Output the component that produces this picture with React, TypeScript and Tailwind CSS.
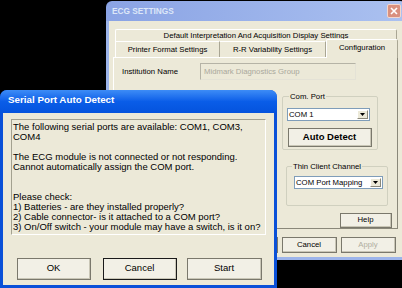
const dialogLines = [
  'The following serial ports are available: COM1, COM3,',
  'COM4',
  '',
  'The ECG module is not connected or not responding.',
  'Cannot automatically assign the COM port.',
  '',
  '',
  'Please check:',
  '1) Batteries - are they installed properly?',
  '2) Cable connector- is it attached to a COM port?',
  '3) On/Off switch - your module may have a switch, is it on?',
];

function Btn({ label, className = '', disabled = false, focused = false }: { label: string; className?: string; disabled?: boolean; focused?: boolean }) {
  return (
    <div
      className={`flex items-center justify-center border ${focused ? 'border-[#1a1a1a]' : 'border-[#7a786c]'} bg-[#f2f0e6] ${className}`}
    >
      <div className="flex h-full w-full items-center justify-center border-b border-r border-b-[#c9c6b6] border-r-[#c9c6b6]">
        <span className={disabled ? 'text-[#b1aea0]' : 'text-black'}>{label}</span>
      </div>
    </div>
  );
}

function Combo({ value, className = '' }: { value: string; className?: string }) {
  return (
    <div className={`flex items-stretch border border-[#7f9db9] bg-white ${className}`}>
      <span className="flex-1 pl-[1px] leading-[11px]">{value}</span>
      <div className="m-[1px] flex w-[11px] items-center justify-center border border-b-[#8a887a] border-r-[#8a887a] border-t-white border-l-white bg-[#ece9d8]">
        <svg width="5" height="3" viewBox="0 0 5 3">
          <path d="M0 0h5L2.5 3z" fill="#000" />
        </svg>
      </div>
    </div>
  );
}

function EcgSettings() {
  return (
    <div className="absolute left-[106px] top-[1px] flex h-[259px] w-[300px] flex-col overflow-hidden rounded-t-[6px] text-[7.75px]">
      <div className="flex h-[20px] shrink-0 items-center justify-between bg-linear-to-r from-[#8aa3e4] to-[#abc1f0] pl-[6px] pr-[5px]">
        <span className="text-[8.3px] font-bold text-[#dde7f8]">ECG SETTINGS</span>
        <div className="flex h-[14px] w-[14px] items-center justify-center rounded-[2px] border border-[#f3d6cc] bg-[#d9907e]">
          <svg width="8" height="8" viewBox="0 0 8 8">
            <path d="M1 1l6 6M7 1L1 7" stroke="#fff" strokeWidth="1.6" />
          </svg>
        </div>
      </div>
      <div className="flex flex-1 flex-col border-x-[3px] border-b-[3px] border-[#9cb4ea] bg-[#ece9d8] pt-[8px]">
        <div className="ml-[4px] mr-[5px] flex flex-col">
          <div className="ml-[2px] mr-[1px] flex h-[12px] items-center justify-center rounded-t-[2px] border-l border-r border-t border-l-white border-t-white border-r-[#a9a694]">
            Default Interpretation And Acquisition Display Settings
          </div>
          <div className="relative z-10 flex h-[16px]">
            <div className="ml-[2px] flex w-[104px] items-center justify-center border-l border-t border-l-white border-t-white">
              Printer Format Settings
            </div>
            <div className="flex w-[107px] items-center justify-center border-l border-r border-t border-l-[#a9a694] border-r-[#a9a694] border-t-white">
              R-R Variability Settings
            </div>
            <div className="-mt-[2px] flex h-[19px] w-[72px] items-center justify-center rounded-t-[2px] border-l border-r border-t border-l-white border-r-[#a9a694] border-t-white bg-[#ece9d8] pb-[2px]">
              Configuration
            </div>
          </div>
          <div className="flex h-[172px] flex-col border border-b-[#8a887a] border-l-white border-r-[#8a887a] border-t-white">
            <div className="mt-[5px] flex items-center pl-[8px]">
              <span className="w-[78px]">Institution Name</span>
              <div className="flex h-[17px] w-[156px] items-center border border-b-[#e4e2d6] border-l-[#b5b3a6] border-r-[#e4e2d6] border-t-[#b5b3a6] pl-[3px] text-[#aaa89c]">
                Midmark Diagnostics Group
              </div>
            </div>
            <fieldset className="ml-[168px] mt-[12px] w-[96px] rounded-[2px] border border-[#d0d0bf] px-[4px] pb-[2px]">
              <legend className="ml-[2px] px-[1px] leading-[9px]">Com. Port</legend>
              <Combo value="COM 1" className="mt-[7px] h-[13px] w-[83px]" />
              <Btn label="Auto Detect" className="ml-[1px] mt-[7px] h-[19px] w-[84px] text-[9.5px] font-bold" />
            </fieldset>
            <fieldset className="ml-[172px] mt-[12px] w-[101px] rounded-[2px] border border-[#d0d0bf] px-[4px] pb-[16px]">
              <legend className="ml-[1px] px-[1px] leading-[9px]">Thin Client Channel</legend>
              <Combo value="COM Port Mapping" className="ml-[3px] mt-[5px] h-[13px] w-[89px]" />
            </fieldset>
            <Btn label="Help" className="ml-[226px] mt-[7px] h-[15px] w-[52px]" />
          </div>
          <div className="mt-[8px] flex justify-end gap-[4px] pr-[2px]">
            <Btn label="OK" className="h-[16px] w-[55px]" />
            <Btn label="Cancel" className="h-[16px] w-[55px]" />
            <Btn label="Apply" className="h-[16px] w-[55px]" disabled />
          </div>
        </div>
      </div>
    </div>
  );
}

function SerialDialog() {
  return (
    <div className="absolute left-0 top-[90px] flex h-[198px] w-[277px] flex-col overflow-hidden rounded-t-[7px] bg-[#0a50d8] text-[9.5px]">
      <div className="flex h-[23px] shrink-0 items-center bg-linear-to-b from-[#3d8cf6] via-[#0a5de8] to-[#0553dd] pb-[2px] pl-[8px]">
        <span className="text-[9.8px] font-bold text-white">Serial Port Auto Detect</span>
      </div>
      <div className="mx-[3px] flex h-[172px] flex-col bg-[#ece9d8]">
        <div className="ml-[8px] mt-[6px] h-[116px] w-[255px] border border-b-white border-l-[#a3a190] border-r-white border-t-[#a3a190] pl-[1px] pt-[2px]">
          {dialogLines.map((line, i) => (
            <div key={i} className="h-[10px] whitespace-nowrap leading-[10px]">
              {line}
            </div>
          ))}
        </div>
        <div className="ml-[14px] mt-[23px] flex">
          <Btn label="OK" className="h-[22px] w-[74px]" />
          <Btn label="Cancel" className="ml-[12px] h-[22px] w-[74px]" focused />
          <Btn label="Start" className="ml-[10px] h-[22px] w-[75px]" />
        </div>
      </div>
    </div>
  );
}

export default function App() {
  return (
    <div className="relative h-[288px] w-[402px] overflow-hidden bg-black font-['Liberation_Sans',Arial,sans-serif] text-black">
      <EcgSettings />
      <SerialDialog />
    </div>
  );
}
